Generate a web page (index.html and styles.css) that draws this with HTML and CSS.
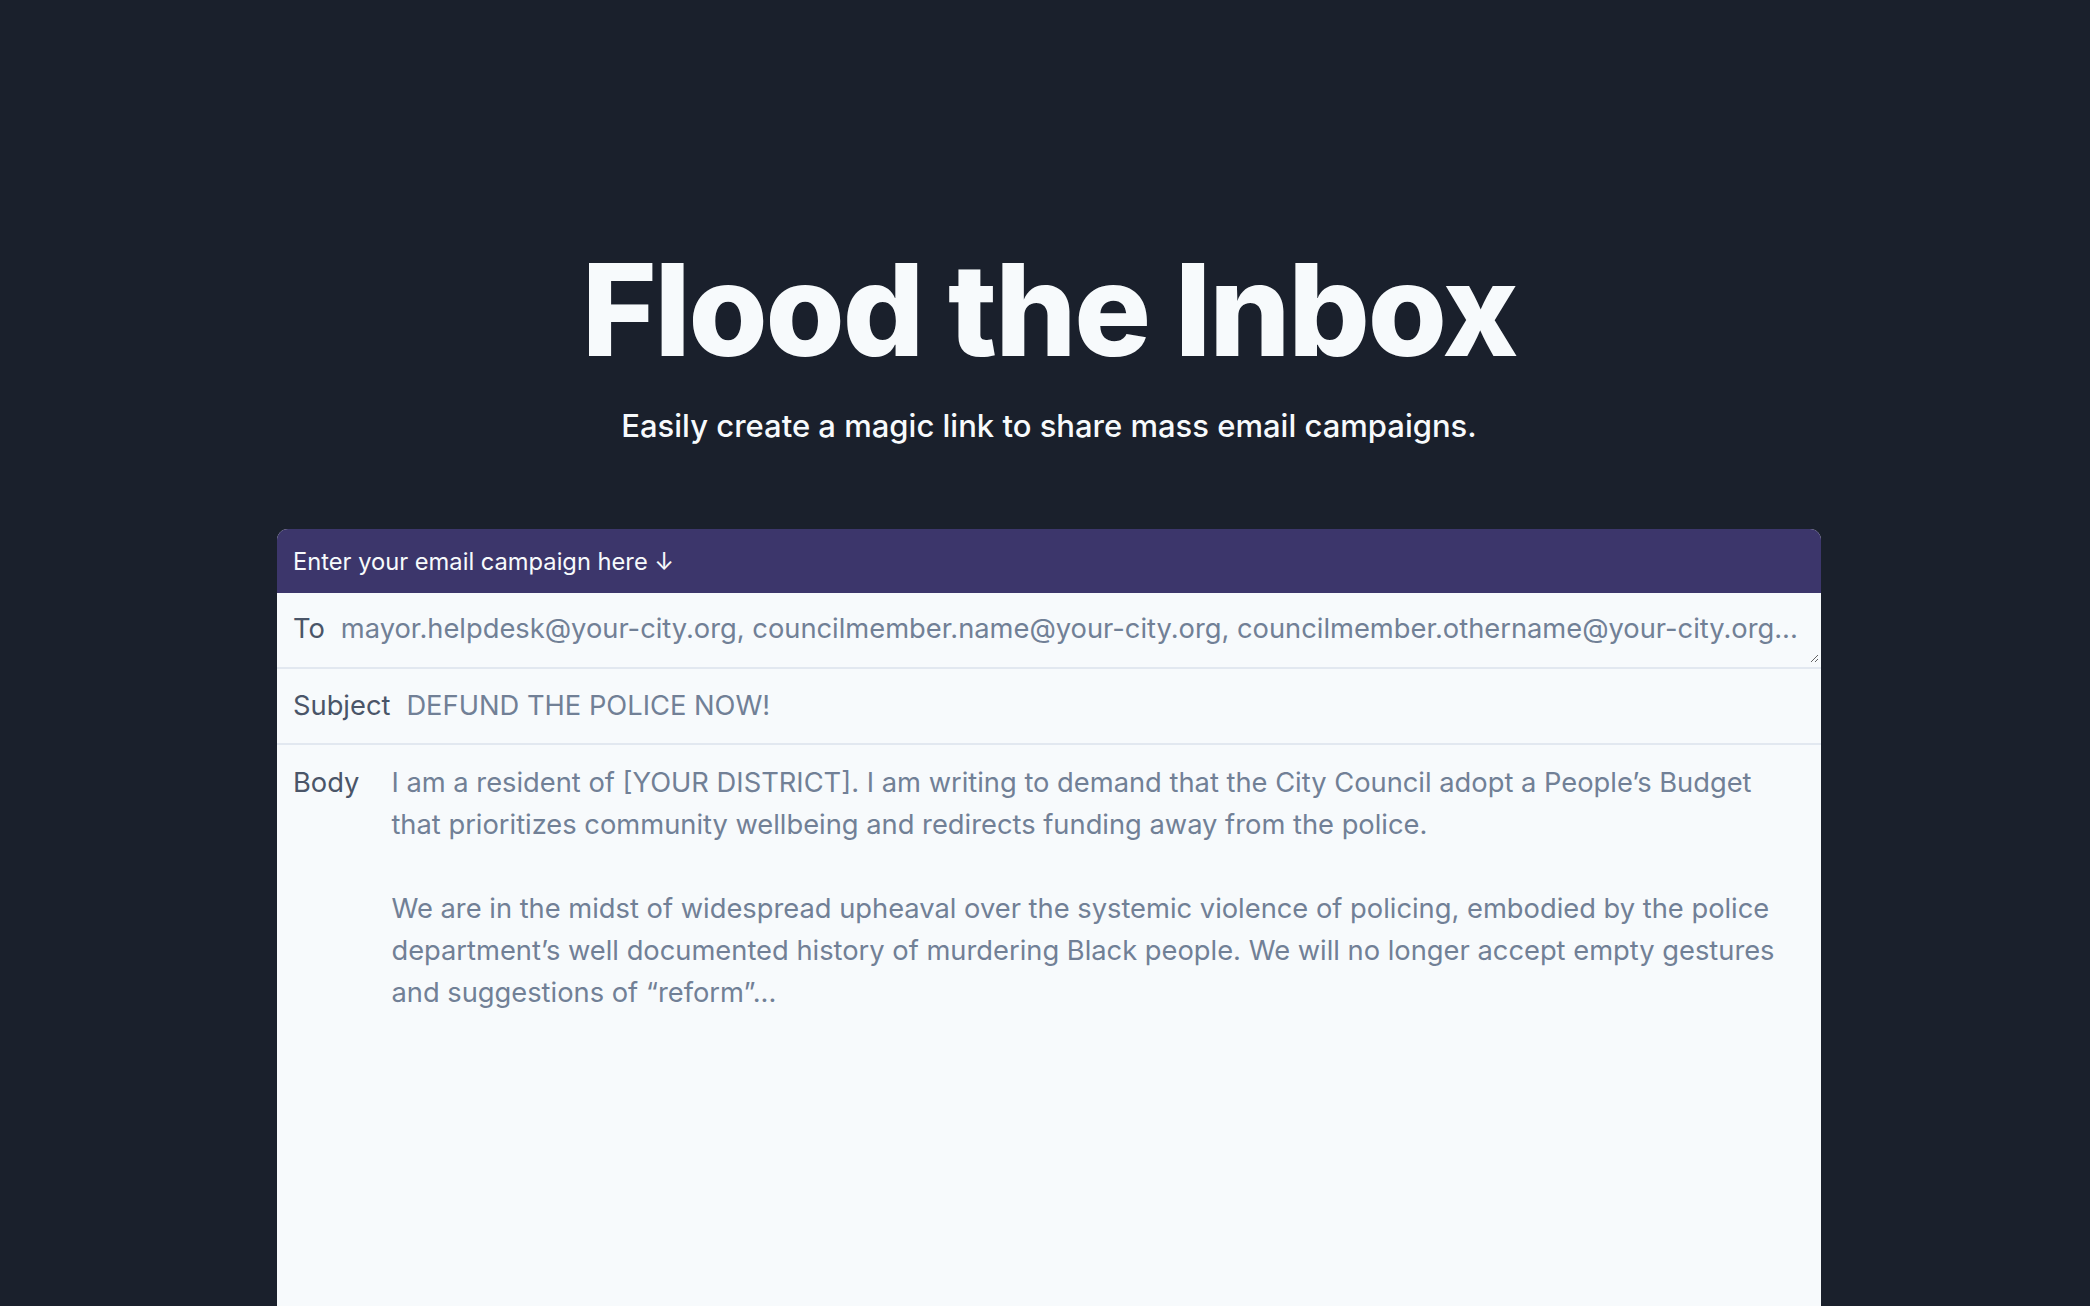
FILE: index.html
```html
<!DOCTYPE html>
<html lang="en">
<head>
<meta charset="utf-8">
<title>Flood the Inbox</title>
<link rel="stylesheet" href="styles.css">
</head>
<body>
<div class="page">
  <header class="hero">
    <h1 class="title">Flood the Inbox</h1>
    <p class="subtitle">Easily create a magic link to share mass email campaigns.</p>
  </header>
  <main class="card">
    <div class="card-head">Enter your email campaign here ↓</div>
    <div class="row row-to">
      <label class="label" for="to">To</label>
      <textarea id="to" class="field field-to" rows="1" placeholder="mayor.helpdesk@your-city.org, councilmember.name@your-city.org, councilmember.othername@your-city.org..."></textarea>
    </div>
    <div class="row row-subject">
      <label class="label" for="subject">Subject</label>
      <input id="subject" class="field field-subject" type="text" placeholder="DEFUND THE POLICE NOW!">
    </div>
    <div class="row row-body">
      <label class="label label-body" for="body">Body</label>
      <textarea id="body" class="field field-body" placeholder="I am a resident of [YOUR DISTRICT]. I am writing to demand that the City Council adopt a People’s Budget&#10;that prioritizes community wellbeing and redirects funding away from the police.&#10;&#10;We are in the midst of widespread upheaval over the systemic violence of policing, embodied by the police&#10;department’s well documented history of murdering Black people. We will no longer accept empty gestures&#10;and suggestions of “reform”..."></textarea>
    </div>
  </main>
</div>
</body>
</html>
```
FILE: styles.css
```css
html, body {
  margin: 0;
  padding: 0;
  background: #1a202c;
  height: 100%;
  overflow: hidden;
}
body {
  font-family: Inter, "Noto Sans", "Liberation Sans", sans-serif;
  color: #f7fafc;
}
.page {
  padding-left: 8px;
  display: flex;
  flex-direction: column;
  align-items: center;
}
.hero {
  padding-top: 246px;
  text-align: center;
}
.title {
  margin: 0;
  font-size: 128px;
  line-height: 1;
  font-weight: 800;
  letter-spacing: -0.017em;
  color: #f7fafc;
}
.subtitle {
  margin: 30px 0 0;
  font-size: 31px;
  line-height: 44px;
  font-weight: 500;
  color: #f7fafc;
}
.card {
  margin-top: 81px;
  width: 1544px;
  background: #f7fafc;
  border-radius: 11px 11px 0 0;
  overflow: hidden;
}
.card-head {
  height: 64px;
  background: #3c366b;
  color: #f7fafc;
  font-size: 23.7px;
  display: flex;
  align-items: center;
  padding-left: 16px;
}
.row {
  display: flex;
  align-items: center;
  padding-left: 16px;
  border-bottom: 2px solid #e2e8f0;
}
.row-to {
  height: 74px;
  align-items: flex-start;
}
.row-to .label { padding-top: 15px; }
.row-subject { height: 74px; }
.row-body {
  align-items: flex-start;
  border-bottom: none;
  padding-top: 17px;
}
.label {
  font-size: 27.3px;
  line-height: 42px;
  color: #4a5568;
  flex: none;
}
.field {
  font-family: Inter, "Noto Sans", "Liberation Sans", sans-serif;
  font-size: 27.3px;
  line-height: 42px;
  color: #718096;
  background: transparent;
  border: none;
  outline: none;
  padding: 0;
  margin: 0;
}
.field::placeholder { color: #718096; opacity: 1; }
.field-to {
  flex: 1;
  margin-left: 16px;
  margin-right: 2px;
  height: 70px;
  padding-top: 15px;
  box-sizing: border-box;
  white-space: pre;
  overflow: hidden;
  resize: vertical;
}
.field-subject {
  flex: 1;
  margin-left: 16px;
  height: 42px;
}
.field-body {
  flex: 1;
  margin-left: 32px;
  margin-right: 16px;
  height: 700px;
  white-space: pre;
  overflow: hidden;
  resize: none;
}
```
